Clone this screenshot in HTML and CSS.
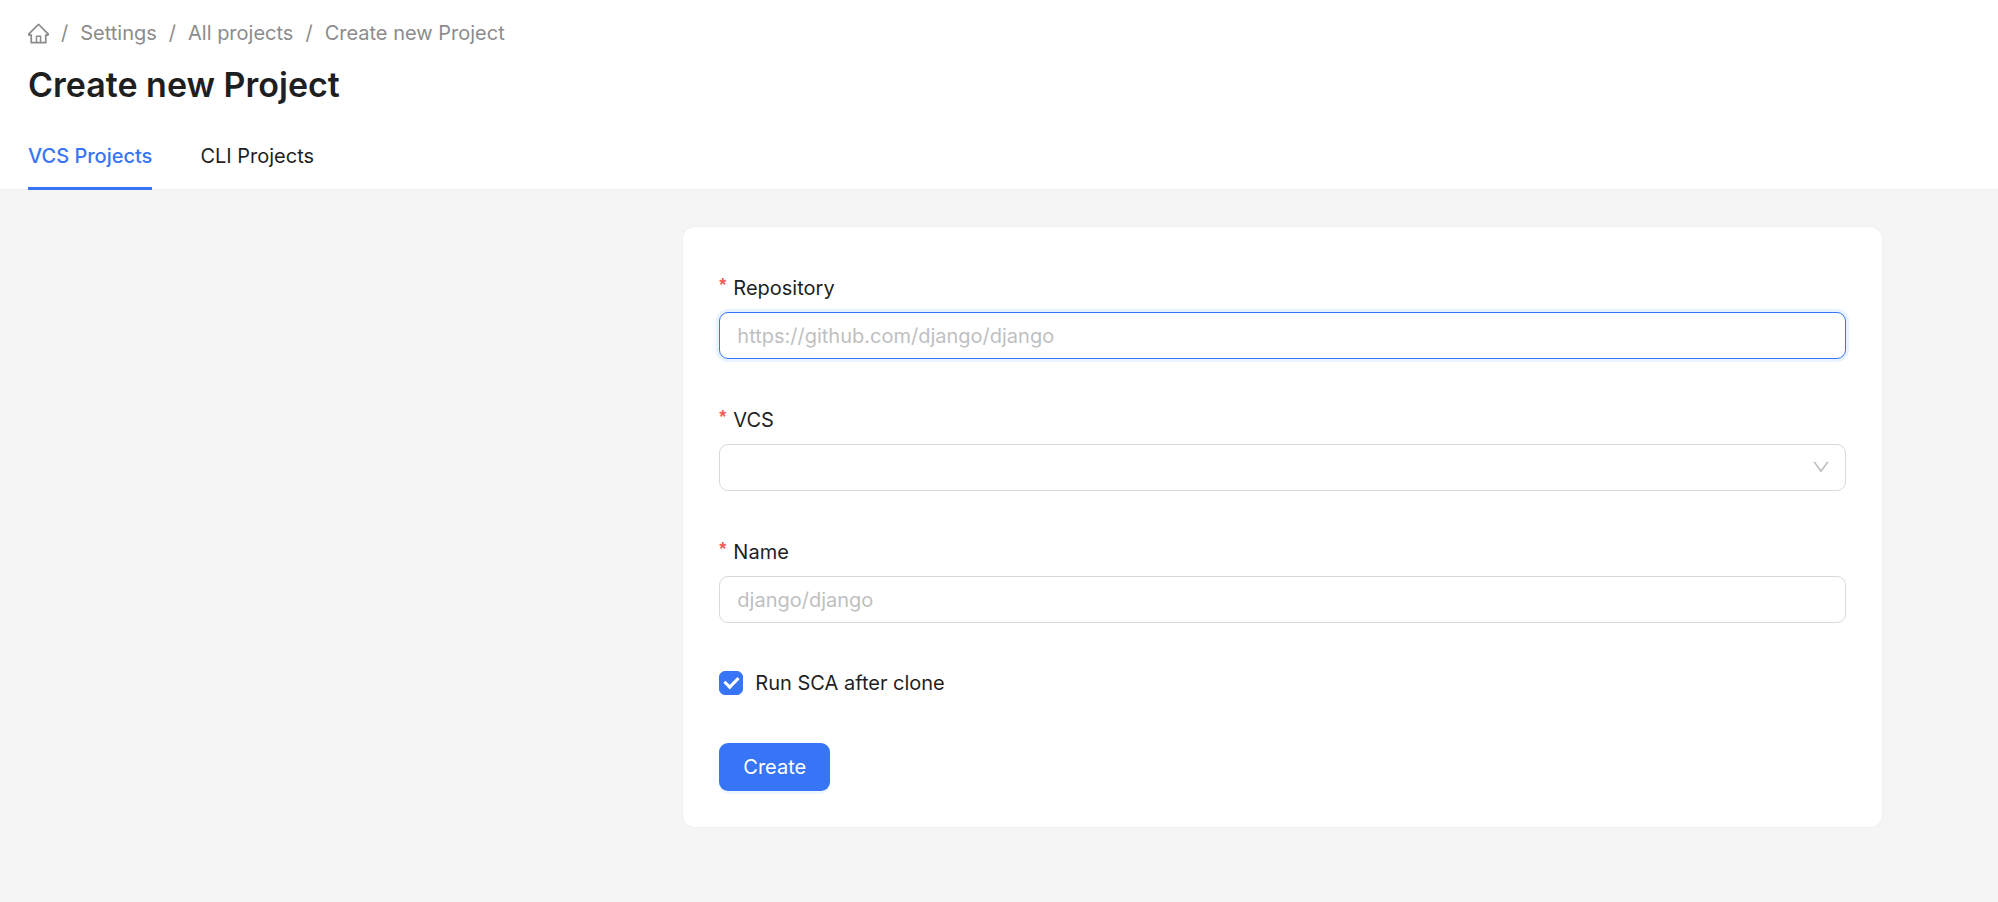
FILE: index.html
```html
<!DOCTYPE html>
<html lang="en">
<head>
    <meta charset="UTF-8">
    <meta name="viewport" content="width=device-width, initial-scale=1.0">
    <title>Create new Project</title>
    <link rel="stylesheet" href="styles.css">
</head>
<body>
    <header class="page-header">
        <!-- Breadcrumb -->
        <nav class="breadcrumb" aria-label="Breadcrumb">
            <a href="#" aria-label="Home">
                <svg class="home-icon" viewBox="64 64 896 896" width="21" height="21" fill="currentColor" aria-hidden="true">
                    <path d="M946.5 505L560.1 118.8l-25.9-25.9a31.5 31.5 0 0 0-44.4 0L77.5 505a63.9 63.9 0 0 0-18.8 46c.4 35.2 29.7 63.3 64.9 63.3h42.5V940h691.8V614.3h43.4c17.1 0 33.2-6.7 45.3-18.8a63.6 63.6 0 0 0 18.7-45.3c0-17-6.7-33.1-18.8-45.2zM568 868H456V664h112v204zm217.9-325.7V868H632V640c0-22.1-17.9-40-40-40H432c-22.1 0-40 17.9-40 40v228H238.1V542.3h-96l370-369.7 23.1 23.1L882 542.3h-96.1z"/>
                </svg>
            </a>
            <span class="separator">/</span>
            <a href="#">Settings</a>
            <span class="separator">/</span>
            <a href="#">All projects</a>
            <span class="separator">/</span>
            <a href="#">Create new Project</a>
        </nav>

        <h1>Create new Project</h1>

        <div class="tabs" role="tablist">
            <button type="button" class="tab active" role="tab" aria-selected="true">VCS Projects</button>
            <button type="button" class="tab" role="tab" aria-selected="false">CLI Projects</button>
        </div>
    </header>

    <main>
        <form class="card">
            <div class="form-item">
                <label class="required" for="repository">Repository</label>
                <input class="control focused" type="text" id="repository" placeholder="https://github.com/django/django">
            </div>

            <div class="form-item">
                <label class="required" for="vcs">VCS</label>
                <div class="select-wrap">
                    <select class="control" id="vcs">
                        <option value=""></option>
                    </select>
                    <svg class="arrow" viewBox="64 64 896 896" width="18" height="18" fill="currentColor" aria-hidden="true">
                        <path d="M884 256h-75c-5.1 0-9.9 2.5-12.900 6.600L512 654.200 227.900 262.600c-3-4.100-7.800-6.600-12.900-6.600h-75c-6.500 0-10.300 7.400-6.500 12.700l352.600 486.100c12.800 17.600 39 17.600 51.700 0l352.600-486.100c3.900-5.300.1-12.700-6.400-12.700z"/>
                    </svg>
                </div>
            </div>

            <div class="form-item">
                <label class="required" for="name">Name</label>
                <input class="control" type="text" id="name" placeholder="django/django">
            </div>

            <div class="checkbox-item">
                <input type="checkbox" id="runSca" checked>
                <label for="runSca">Run SCA after clone</label>
            </div>

            <button type="submit" class="submit">Create</button>
        </form>
    </main>
</body>
</html>
```
FILE: styles.css
```css
* {
    box-sizing: border-box;
}

body {
    margin: 0;
    min-height: 100vh;
    background-color: #f5f5f5;
    color: #1f1f1f;
    font-family: Inter, "Liberation Sans", sans-serif;
    font-size: 20px;
    line-height: 32px;
}

input, select, button {
    font: inherit;
    color: inherit;
}

/* Header */
.page-header {
    background-color: #fff;
    border-bottom: 1px solid #f0f0f0;
    padding: 17px 28px 0;
}

.breadcrumb {
    display: flex;
    align-items: center;
    color: #8c8c8c;
}

.breadcrumb a {
    color: inherit;
    text-decoration: none;
}

.separator {
    margin: 0 12px;
}

.home-icon {
    display: block;
}

h1 {
    margin: 12px 0 0;
    font-size: 34px;
    font-weight: 600;
    line-height: 48px;
}

.tabs {
    display: flex;
    gap: 48px;
    margin: 13px 0 -1px;
}

.tab {
    background: none;
    border: none;
    border-bottom: 3px solid transparent;
    padding: 18px 0 15px;
    cursor: pointer;
}

.tab.active {
    color: #3875f6;
    border-bottom-color: #3875f6;
    font-weight: 500;
}

/* Form */
.card {
    width: 60%;
    margin: 37px 0 37px 34.2%;
    padding: 37px 36px 36px;
    background-color: #fff;
    border-radius: 12px;
    box-shadow: 0 0 0 1px #f0f0f0;
}

.form-item {
    margin-bottom: 37px;
}

.form-item label {
    display: block;
    line-height: 48px;
}

.required::before {
    content: "*";
    color: #ee5f5b;
    font-family: "Liberation Sans", sans-serif;
    font-weight: bold;
    font-size: 18px;
    line-height: 1;
    vertical-align: 4px;
    margin-right: 7px;
}

.control {
    display: block;
    width: 100%;
    height: 47px;
    padding: 0 17px;
    background-color: #fff;
    border: 1px solid #d9d9d9;
    border-radius: 9px;
    outline: none;
    appearance: none;
}

.control::placeholder {
    color: #bfbfbf;
    opacity: 1;
}

.control.focused, .control:focus {
    border-color: #3875f6;
    box-shadow: 0 0 0 3px #e8f3ff;
}

.select-wrap {
    position: relative;
}

.arrow {
    position: absolute;
    top: 14px;
    right: 16px;
    color: #bfbfbf;
    pointer-events: none;
}

.checkbox-item {
    display: flex;
    align-items: center;
    gap: 12px;
    height: 46px;
    margin-bottom: 37px;
}

.checkbox-item input {
    display: grid;
    place-items: center;
    width: 24px;
    height: 24px;
    margin: 0;
    border: 1px solid #d9d9d9;
    border-radius: 6px;
    appearance: none;
}

.checkbox-item input:checked {
    background-color: #3875f6;
    border-color: #3875f6;
}

.checkbox-item input:checked::after {
    content: "";
    box-sizing: border-box;
    width: 9px;
    height: 14px;
    margin-bottom: 4px;
    border: solid #fff;
    border-width: 0 3px 3px 0;
    transform: rotate(45deg);
}

.submit {
    display: block;
    height: 48px;
    padding: 0 24px;
    background-color: #3875f6;
    border: none;
    border-radius: 9px;
    box-shadow: 0 3px 0 #eef6ff;
    color: #fff;
    cursor: pointer;
}
```
